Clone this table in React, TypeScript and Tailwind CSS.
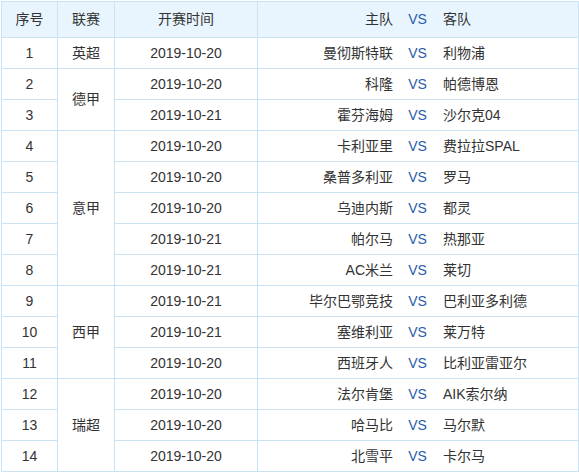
import React from 'react';

type Match = { no: number; date: string; home: string; away: string };

const groups: { league: string; matches: Match[] }[] = [
  { league: '英超', matches: [{ no: 1, date: '2019-10-20', home: '曼彻斯特联', away: '利物浦' }] },
  {
    league: '德甲',
    matches: [
      { no: 2, date: '2019-10-20', home: '科隆', away: '帕德博恩' },
      { no: 3, date: '2019-10-21', home: '霍芬海姆', away: '沙尔克04' },
    ],
  },
  {
    league: '意甲',
    matches: [
      { no: 4, date: '2019-10-20', home: '卡利亚里', away: '费拉拉SPAL' },
      { no: 5, date: '2019-10-20', home: '桑普多利亚', away: '罗马' },
      { no: 6, date: '2019-10-20', home: '乌迪内斯', away: '都灵' },
      { no: 7, date: '2019-10-21', home: '帕尔马', away: '热那亚' },
      { no: 8, date: '2019-10-21', home: 'AC米兰', away: '莱切' },
    ],
  },
  {
    league: '西甲',
    matches: [
      { no: 9, date: '2019-10-21', home: '毕尔巴鄂竞技', away: '巴利亚多利德' },
      { no: 10, date: '2019-10-21', home: '塞维利亚', away: '莱万特' },
      { no: 11, date: '2019-10-20', home: '西班牙人', away: '比利亚雷亚尔' },
    ],
  },
  {
    league: '瑞超',
    matches: [
      { no: 12, date: '2019-10-20', home: '法尔肯堡', away: 'AIK索尔纳' },
      { no: 13, date: '2019-10-20', home: '哈马比', away: '马尔默' },
      { no: 14, date: '2019-10-20', home: '北雪平', away: '卡尔马' },
    ],
  },
];

const cell = 'border-r border-b border-[#cbe2f2] p-0 text-center align-middle';

const Teams = ({ home, away }: { home: string; away: string }) => (
  <div className="flex items-center">
    <span className="w-[135px] text-right whitespace-nowrap">{home}</span>
    <span className="ml-[15px] w-[19px] text-[#2a5caa]">VS</span>
    <span className="ml-[16px] whitespace-nowrap">{away}</span>
  </div>
);

export default function App() {
  return (
    <div className="bg-white w-[579px] h-[472px] pt-px pl-px">
      <table
        className="w-[578px] table-fixed border-separate border-spacing-0 border-t border-l border-[#cbe2f2] text-[14px] text-[#333]"
        style={{ fontFamily: '"Liberation Sans", "Noto Sans CJK SC", sans-serif' }}
      >
        <colgroup>
          <col className="w-[56px]" />
          <col className="w-[57px]" />
          <col className="w-[143px]" />
          <col className="w-[321px]" />
        </colgroup>
        <thead>
          <tr className="h-[36px] bg-[#e8f5fe]">
            <th className={`${cell} font-normal`}>序号</th>
            <th className={`${cell} font-normal`}>联赛</th>
            <th className={`${cell} font-normal`}>开赛时间</th>
            <th className={`${cell} font-normal`}>
              <Teams home="主队" away="客队" />
            </th>
          </tr>
        </thead>
        <tbody>
          {groups.map((g) =>
            g.matches.map((m, i) => (
              <tr key={m.no} className="h-[31px]">
                <td className={cell}>{m.no}</td>
                {i === 0 && (
                  <td className={cell} rowSpan={g.matches.length}>
                    {g.league}
                  </td>
                )}
                <td className={cell}>{m.date}</td>
                <td className={cell}>
                  <Teams home={m.home} away={m.away} />
                </td>
              </tr>
            ))
          )}
        </tbody>
      </table>
    </div>
  );
}
